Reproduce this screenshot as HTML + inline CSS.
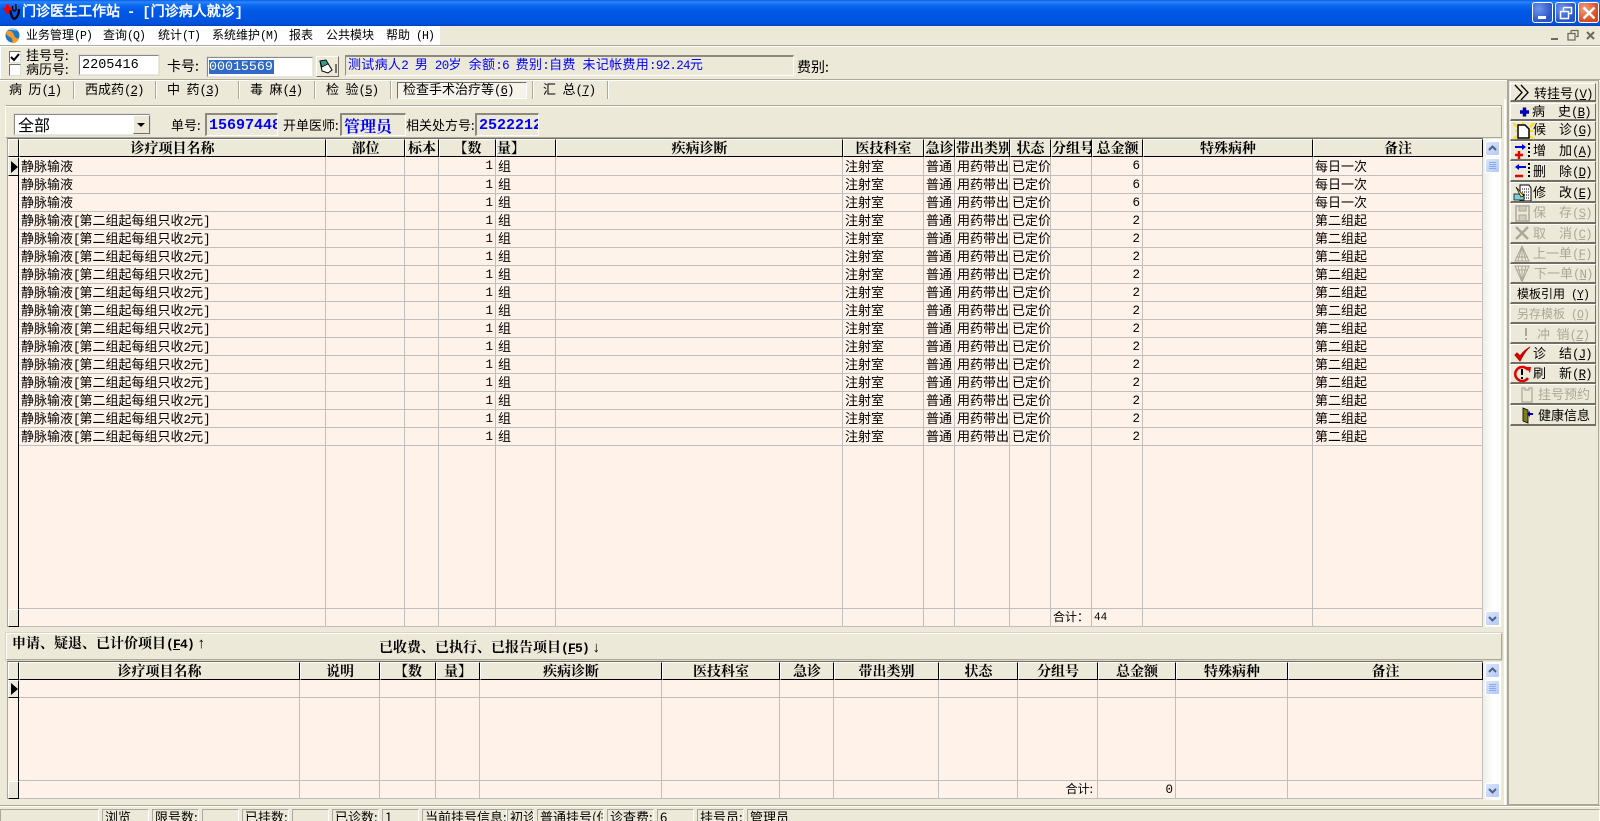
<!DOCTYPE html>
<html lang="zh"><head><meta charset="utf-8"><title>门诊医生工作站</title>
<style>
*{box-sizing:border-box}
html,body{margin:0;padding:0}
body{width:1600px;height:821px;overflow:hidden;background:#ECE9D8;position:relative;font:13px/1 "WenQuanYi Zen Hei","Noto Sans CJK SC",sans-serif;color:#000}
.a{position:absolute;white-space:nowrap}
i.h{font-style:normal;font-family:"Liberation Mono",monospace;font-size:12.5px;letter-spacing:-1px;white-space:pre;line-height:0}
i.s{font-style:normal;font-family:"Liberation Mono",monospace;font-size:11.5px;letter-spacing:-.9px;white-space:pre;line-height:0}
.mn{top:28px;font-size:12px;line-height:14px}
.title{left:0;top:0;width:1600px;height:26px;background:linear-gradient(#0a5ce8 0,#2a86fb 2px,#0e6af0 5px,#0058e6 11px,#0055e0 20px,#0050d8 24px,#0040b8 26px)}
.wb{top:2px;width:21px;height:21px;border:1px solid #fff;border-radius:3px;background:radial-gradient(circle at 30% 30%,#6f95ea,#2a55c9 70%)}
.sunk{border:1px solid;border-color:#8c8a7c #fff #fff #8c8a7c;background:#ECE9D8}
.inp{background:#fff;border:2px solid;border-color:#8c8a7c #ECE9D8 #ECE9D8 #8c8a7c;outline:1px solid #ddd;outline-offset:-1px}
.sep{width:2px;background:#fff;border-left:1px solid #aca899}
.hl{left:0;height:2px;border-top:1px solid #aca899;background:#fff;width:1600px}
.tab{top:82px;font-size:13px}
u{text-decoration:underline}
table{position:absolute;border-collapse:separate;border-spacing:0;table-layout:fixed;background:#FFF2E8}
td,th{padding:0 2px;overflow:hidden;white-space:nowrap;border-right:1px solid #bfbfbf;border-bottom:1px solid #bfbfbf;font-weight:400;font-size:13px;line-height:14px;height:18px}
td{padding-bottom:2px}
th{background:#ECE9D8;font:bold 14px/14px "Noto Serif CJK SC","WenQuanYi Zen Hei",serif;height:18px;border:1px solid;border-color:#fff #000 #000 #fff;padding:0;text-align:center}
td:first-child{padding:0;border-right:1px solid #000;border-bottom:0}
td.r{text-align:right;font-family:"Liberation Mono",monospace;font-size:12.5px;padding-right:2px;padding-bottom:0}
td.g{background:#ECE9D8;border:1px solid;border-color:#fff #000 #000 #fff}
.arr{display:block;width:0;height:0;margin-left:2px;border:6px solid transparent;border-left:7px solid #000;border-right:0}
.track{left:1483px;width:18px;background:linear-gradient(90deg,#efefe8,#fff 60%,#fdfdfd)}
.sb{left:1485px;width:15px;height:15px;border:1px solid #fff;border-radius:2px;background:linear-gradient(135deg,#dbe6fd,#b4c8f6)}
.btn{left:1510px;width:86px;border:1px solid;border-color:#fff #716f64 #716f64 #fff;background:#ECE9D8;border-bottom-width:2px;font-size:13px}
.btn span{position:absolute;top:1px;white-space:pre}
.btn svg{position:absolute;left:2px;top:0}
.dis{color:#aca899}
.st{top:809px;height:12px;overflow:hidden;border:1px solid;border-color:#aca899 #fff #fff #aca899;border-bottom:0;font-size:13px;padding:0 2px;line-height:13px}
.bt{font:bold 14px/15px "Noto Serif CJK SC","WenQuanYi Zen Hei",serif}
.bt i.h{font-weight:700;font-size:13px;letter-spacing:-.8px}
</style></head><body>

<div class="a title"></div>
<svg class="a" style="left:2px;top:2px" width="20" height="20" viewBox="0 0 20 20"><path d="M8 7c1 6 2 9 4 10 3-1 5-5 5-10" fill="none" stroke="#000" stroke-width="2.200"/><path d="M11 4c-2 3 1 6 2.500 4.500S13 4 14 2" fill="none" stroke="#000" stroke-width="1.500"/><path d="M1 7h9M5.500 2.500v9" stroke="#e8000c" stroke-width="3"/></svg>
<div class="a" style="left:22px;top:5px;color:#fff;font:bold 14px/16px 'Liberation Mono','WenQuanYi Zen Hei',monospace;word-spacing:-1.500px">门诊医生工作站 - [门诊病人就诊]</div>
<div class="a wb" style="left:1532px"><div class="a" style="left:5px;top:13px;width:8px;height:3px;background:#fff"></div></div>
<div class="a wb" style="left:1555px"><svg class="a" style="left:3px;top:3px" width="14" height="14"><path d="M4.500 1.500h8v6h-3M1.500 5.500h8v7h-8z M4.500 1.500v3" fill="none" stroke="#fff" stroke-width="1.500"/></svg></div>
<div class="a wb" style="left:1578px;background:radial-gradient(circle at 30% 30%,#f0a080,#d9471f 70%)"><svg class="a" style="left:3px;top:3px" width="14" height="14"><path d="M1.500 1.500l11 11M12.500 1.500l-11 11" stroke="#fff" stroke-width="2.400"/></svg></div>

<div class="a" style="left:0;top:26px;width:440px;height:19px;background:#fff"></div>
<svg class="a" style="left:5px;top:27px" width="15" height="17" viewBox="0 0 15 17"><circle cx="7.500" cy="8.500" r="7" fill="#1e78c8"/><path d="M1 5c4-3 7 0 8 3s3 4 5 3c-1 4-5 6-8 5 3-2 1-5-1-6S1 8 1 5z" fill="#f59a23"/><path d="M3 3c3-2 7-2 9 1-3-1-6-1-9-1z" fill="#9ed0f5"/></svg>
<div class="a mn" style="left:26px">业务管理<i class="s">(P)</i></div>
<div class="a mn" style="left:103px">查询<i class="s">(Q)</i></div>
<div class="a mn" style="left:158px">统计<i class="s">(T)</i></div>
<div class="a mn" style="left:212px">系统维护<i class="s">(M)</i></div>
<div class="a mn" style="left:289px">报表</div>
<div class="a mn" style="left:326px">公共模块</div>
<div class="a mn" style="left:386px">帮助<i class="s"> (H)</i></div>
<div class="a" style="left:1547px;top:28px;width:16px;height:16px;color:#6b6b60"><div class="a" style="left:4px;top:10px;width:7px;height:2px;background:#6b6b60"></div></div>
<svg class="a" style="left:1566px;top:29px" width="15" height="14"><path d="M5 1.500h7v6h-2M2 4.500h7v6.500H2zM5 1.500v3" fill="none" stroke="#6b6b60" stroke-width="1.300"/></svg>
<svg class="a" style="left:1584px;top:29px" width="14" height="14"><path d="M3 3l7 7M10 3l-7 7" stroke="#6b6b60" stroke-width="2"/></svg>

<div class="a hl" style="top:45px"></div>
<div class="a hl" style="top:79px"></div>
<div class="a" style="left:0;top:47px;width:2px;height:32px;border-left:1px solid #fff"></div>

<div class="a" style="left:9px;top:51px;width:12px;height:12px;background:#fff;border:1px solid;border-color:#716f64 #ddd #ddd #716f64"><svg class="a" style="left:0;top:0" width="10" height="10"><path d="M1 5l3 3 5-6" fill="none" stroke="#000" stroke-width="2"/></svg></div>
<div class="a" style="left:9px;top:64px;width:12px;height:12px;background:#fff;border:1px solid;border-color:#716f64 #ddd #ddd #716f64"></div>
<div class="a" style="left:26px;top:48px;font-size:13px;line-height:14px">挂号号:</div>
<div class="a" style="left:26px;top:62px;font-size:13px;line-height:14px">病历号:</div>
<div class="a inp" style="left:78px;top:54px;width:82px;height:22px;font:13.500px/18px 'Liberation Mono',monospace;padding:1px 0 0 2px">2205416</div>
<div class="a" style="left:167px;top:58px;font-size:14px;line-height:16px">卡号:</div>
<div class="a inp" style="left:206px;top:56px;width:108px;height:22px"></div>
<div class="a" style="left:209px;top:60px;width:65px;height:14px;background:#316AC5;color:#fff;font:13.300px/14px 'Liberation Mono',monospace">00015569</div>
<div class="a" style="left:316px;top:56px;width:23px;height:21px;border:1px solid;border-color:#fff #716f64 #716f64 #fff"><svg class="a" style="left:1px;top:1px" width="20" height="18"><path d="M2 3l6-1 6 10-4 3-6-2z" fill="#fff" stroke="#000"/><path d="M2 3l6-1 2 4-6 3z" fill="#2e9e8a" stroke="#000" stroke-width=".7"/><path d="M18 6v9" stroke="#000" stroke-width="1"/></svg></div>
<div class="a sunk" style="left:345px;top:55px;width:449px;height:21px;border-top:2px solid #8c8a7c"></div>
<div class="a" style="left:348px;top:57px;color:#0000ff;font-size:13px;line-height:14px;letter-spacing:.3px">测试病人<i class="h" style="letter-spacing:-.7px">2 </i>男<i class="h" style="letter-spacing:-.7px"> 20</i>岁<i class="h" style="letter-spacing:-.7px"> </i>余额<i class="h" style="letter-spacing:-.7px">:6 </i>费别<i class="h" style="letter-spacing:-.7px">:</i>自费<i class="h" style="letter-spacing:-.7px"> </i>未记帐费用<i class="h" style="letter-spacing:-.7px">:92.24</i>元</div>
<div class="a" style="left:797px;top:59px;font-size:14px;line-height:16px">费别:</div>

<div class="a tab" style="left:9px">病<i class="h"> </i>历<i class="h">(<u>1</u>)</i></div>
<div class="a sep" style="left:73px;top:81px;height:18px"></div>
<div class="a tab" style="left:85px">西成药<i class="h">(<u>2</u>)</i></div>
<div class="a sep" style="left:155px;top:81px;height:18px"></div>
<div class="a tab" style="left:167px">中<i class="h"> </i>药<i class="h">(<u>3</u>)</i></div>
<div class="a sep" style="left:238px;top:81px;height:18px"></div>
<div class="a tab" style="left:250px">毒<i class="h"> </i>麻<i class="h">(<u>4</u>)</i></div>
<div class="a sep" style="left:314px;top:81px;height:18px"></div>
<div class="a tab" style="left:326px">检<i class="h"> </i>验<i class="h">(<u>5</u>)</i></div>
<div class="a sep" style="left:390px;top:81px;height:18px"></div>
<div class="a" style="left:397px;top:82px;width:130px;height:17px;border:1px solid;border-color:#716f64 #fff #fff #716f64;background:#f5f3ea"></div>
<div class="a tab" style="left:403px">检查手术治疗等<i class="h">(<u>6</u>)</i></div>
<div class="a sep" style="left:532px;top:81px;height:18px"></div>
<div class="a tab" style="left:543px">汇<i class="h"> </i>总<i class="h">(<u>7</u>)</i></div>
<div class="a sep" style="left:607px;top:81px;height:18px"></div>

<div class="a" style="left:0;top:99px;width:1506px;height:707px;border-right:2px solid #fff"></div>
<div class="a" style="left:5px;top:105px;width:1497px;height:33px;border:1px solid;border-color:#aca899 #aca899 #aca899 #fff;box-shadow:inset 0 1px 0 #fff"></div>

<div class="a inp" style="left:13px;top:113px;width:138px;height:23px;font-size:16px;line-height:19px;padding-left:3px">全部</div>
<div class="a" style="left:133px;top:115px;width:17px;height:19px;background:#ECE9D8;border:1px solid;border-color:#fff #716f64 #716f64 #fff"><div class="a" style="left:3px;top:7px;border:4px solid transparent;border-top:4px solid #000;border-bottom:0"></div></div>
<div class="a" style="left:171px;top:118px;font-size:13px;line-height:14px">单号:</div>
<div class="a sunk" style="left:205px;top:113px;width:73px;height:23px;overflow:hidden;color:#0000ff;font:bold 15px/21px 'Liberation Mono','Liberation Serif',monospace;padding-left:2px;border-width:2px 1px 1px 2px">15697448</div>
<div class="a" style="left:283px;top:118px;font-size:13px;line-height:14px">开单医师:</div>
<div class="a sunk" style="left:340px;top:113px;width:66px;height:23px;color:#0000ff;font:bold 16px/21px 'Noto Serif CJK SC','WenQuanYi Zen Hei',serif;padding-left:2px;border-width:2px 1px 1px 2px">管理员</div>
<div class="a" style="left:406px;top:118px;font-size:13px;line-height:14px">相关处方号:</div>
<div class="a sunk" style="left:475px;top:113px;width:64px;height:23px;overflow:hidden;color:#0000ff;font:bold 15px/21px 'Liberation Mono','Liberation Serif',monospace;padding-left:2px;border-width:2px 1px 1px 2px">2522212</div>

<table style="left:7px;top:138px;width:1476px;border-top:1px solid #716f64;border-left:1px solid #aca899">
<colgroup><col style="width:11px"><col style="width:307px"><col style="width:79px"><col style="width:34px"><col style="width:57px"><col style="width:60px"><col style="width:287px"><col style="width:81px"><col style="width:31px"><col style="width:55px"><col style="width:41px"><col style="width:41px"><col style="width:51px"><col style="width:170px"><col style="width:170px"></colgroup>
<tr><th></th><th>诊疗项目名称</th><th>部位</th><th>标本</th><th>【数</th><th style="text-align:left">量】</th><th>疾病诊断</th><th>医技科室</th><th>急诊</th><th>带出类别</th><th>状态</th><th>分组号</th><th>总金额</th><th>特殊病种</th><th>备注</th></tr>
<tr style="height:19px"><td class="g" style="height:19px"><i class="arr"></i></td><td style="padding-bottom:0">静脉输液</td><td></td><td></td><td class="r">1</td><td style="padding-bottom:0">组</td><td></td><td style="padding-bottom:0">注射室</td><td style="padding-bottom:0">普通</td><td style="padding-bottom:0">用药带出</td><td style="padding-bottom:0">已定价</td><td></td><td class="r">6</td><td></td><td style="padding-bottom:0">每日一次</td></tr>
<tr><td></td><td>静脉输液</td><td></td><td></td><td class="r">1</td><td>组</td><td></td><td>注射室</td><td>普通</td><td>用药带出</td><td>已定价</td><td></td><td class="r">6</td><td></td><td>每日一次</td></tr>
<tr><td></td><td>静脉输液</td><td></td><td></td><td class="r">1</td><td>组</td><td></td><td>注射室</td><td>普通</td><td>用药带出</td><td>已定价</td><td></td><td class="r">6</td><td></td><td>每日一次</td></tr>
<tr><td></td><td>静脉输液<i class="h">[</i>第二组起每组只收<i class="h">2</i>元<i class="h">]</i></td><td></td><td></td><td class="r">1</td><td>组</td><td></td><td>注射室</td><td>普通</td><td>用药带出</td><td>已定价</td><td></td><td class="r">2</td><td></td><td>第二组起</td></tr>
<tr><td></td><td>静脉输液<i class="h">[</i>第二组起每组只收<i class="h">2</i>元<i class="h">]</i></td><td></td><td></td><td class="r">1</td><td>组</td><td></td><td>注射室</td><td>普通</td><td>用药带出</td><td>已定价</td><td></td><td class="r">2</td><td></td><td>第二组起</td></tr>
<tr><td></td><td>静脉输液<i class="h">[</i>第二组起每组只收<i class="h">2</i>元<i class="h">]</i></td><td></td><td></td><td class="r">1</td><td>组</td><td></td><td>注射室</td><td>普通</td><td>用药带出</td><td>已定价</td><td></td><td class="r">2</td><td></td><td>第二组起</td></tr>
<tr><td></td><td>静脉输液<i class="h">[</i>第二组起每组只收<i class="h">2</i>元<i class="h">]</i></td><td></td><td></td><td class="r">1</td><td>组</td><td></td><td>注射室</td><td>普通</td><td>用药带出</td><td>已定价</td><td></td><td class="r">2</td><td></td><td>第二组起</td></tr>
<tr><td></td><td>静脉输液<i class="h">[</i>第二组起每组只收<i class="h">2</i>元<i class="h">]</i></td><td></td><td></td><td class="r">1</td><td>组</td><td></td><td>注射室</td><td>普通</td><td>用药带出</td><td>已定价</td><td></td><td class="r">2</td><td></td><td>第二组起</td></tr>
<tr><td></td><td>静脉输液<i class="h">[</i>第二组起每组只收<i class="h">2</i>元<i class="h">]</i></td><td></td><td></td><td class="r">1</td><td>组</td><td></td><td>注射室</td><td>普通</td><td>用药带出</td><td>已定价</td><td></td><td class="r">2</td><td></td><td>第二组起</td></tr>
<tr><td></td><td>静脉输液<i class="h">[</i>第二组起每组只收<i class="h">2</i>元<i class="h">]</i></td><td></td><td></td><td class="r">1</td><td>组</td><td></td><td>注射室</td><td>普通</td><td>用药带出</td><td>已定价</td><td></td><td class="r">2</td><td></td><td>第二组起</td></tr>
<tr><td></td><td>静脉输液<i class="h">[</i>第二组起每组只收<i class="h">2</i>元<i class="h">]</i></td><td></td><td></td><td class="r">1</td><td>组</td><td></td><td>注射室</td><td>普通</td><td>用药带出</td><td>已定价</td><td></td><td class="r">2</td><td></td><td>第二组起</td></tr>
<tr><td></td><td>静脉输液<i class="h">[</i>第二组起每组只收<i class="h">2</i>元<i class="h">]</i></td><td></td><td></td><td class="r">1</td><td>组</td><td></td><td>注射室</td><td>普通</td><td>用药带出</td><td>已定价</td><td></td><td class="r">2</td><td></td><td>第二组起</td></tr>
<tr><td></td><td>静脉输液<i class="h">[</i>第二组起每组只收<i class="h">2</i>元<i class="h">]</i></td><td></td><td></td><td class="r">1</td><td>组</td><td></td><td>注射室</td><td>普通</td><td>用药带出</td><td>已定价</td><td></td><td class="r">2</td><td></td><td>第二组起</td></tr>
<tr><td></td><td>静脉输液<i class="h">[</i>第二组起每组只收<i class="h">2</i>元<i class="h">]</i></td><td></td><td></td><td class="r">1</td><td>组</td><td></td><td>注射室</td><td>普通</td><td>用药带出</td><td>已定价</td><td></td><td class="r">2</td><td></td><td>第二组起</td></tr>
<tr><td></td><td>静脉输液<i class="h">[</i>第二组起每组只收<i class="h">2</i>元<i class="h">]</i></td><td></td><td></td><td class="r">1</td><td>组</td><td></td><td>注射室</td><td>普通</td><td>用药带出</td><td>已定价</td><td></td><td class="r">2</td><td></td><td>第二组起</td></tr>
<tr><td></td><td>静脉输液<i class="h">[</i>第二组起每组只收<i class="h">2</i>元<i class="h">]</i></td><td></td><td></td><td class="r">1</td><td>组</td><td></td><td>注射室</td><td>普通</td><td>用药带出</td><td>已定价</td><td></td><td class="r">2</td><td></td><td>第二组起</td></tr>
<tr><td style="height:163px"></td><td style="height:163px"></td><td></td><td></td><td></td><td></td><td></td><td></td><td></td><td></td><td></td><td></td><td></td><td></td><td></td></tr>
<tr><td class="g"></td><td></td><td></td><td></td><td></td><td></td><td></td><td></td><td></td><td></td><td></td><td style="font-size:12px">合计：</td><td style="font-size:11px;font-family:'Liberation Mono',monospace;padding-bottom:0">44</td><td></td><td></td></tr>
</table>
<div class="a track" style="top:139px;height:488px"></div>
<div class="a sb" style="top:141px"><svg class="a" width="13" height="13"><path d="M3 8l3.500-3.500L10 8" fill="none" stroke="#4d6185" stroke-width="2"/></svg></div>
<div class="a sb" style="top:158px"><svg class="a" width="13" height="13"><path d="M3 3.500h7M3 5.500h7M3 7.500h7M3 9.500h7" stroke="#8aa8ee"/></svg></div>
<div class="a sb" style="top:611px"><svg class="a" width="13" height="13"><path d="M3 5l3.500 3.500L10 5" fill="none" stroke="#4d6185" stroke-width="2"/></svg></div>

<div class="a" style="left:6px;top:633px;width:1496px;height:27px;border:1px solid;border-color:#fff #aca899 #aca899 #fff;outline:1px solid #d8d5c4"></div>
<div class="a bt" style="left:12px;top:636px">申请、疑退、已计价项目<i class="h">(<u>F</u>4)</i> <span style="font:bold 15px/15px 'Liberation Sans'">↑</span></div>
<div class="a bt" style="left:379px;top:640px">已收费、已执行、已报告项目<i class="h">(<u>F</u>5)</i> <span style="font:bold 15px/15px 'Liberation Sans'">↓</span></div>

<table style="left:7px;top:661px;width:1476px;border-top:1px solid #716f64;border-left:1px solid #aca899">
<colgroup><col style="width:11px"><col style="width:281px"><col style="width:80px"><col style="width:56px"><col style="width:44px"><col style="width:182px"><col style="width:118px"><col style="width:54px"><col style="width:105px"><col style="width:79px"><col style="width:80px"><col style="width:78px"><col style="width:112px"><col style="width:195px"></colgroup>
<tr><th></th><th>诊疗项目名称</th><th>说明</th><th>【数</th><th>量】</th><th>疾病诊断</th><th>医技科室</th><th>急诊</th><th>带出类别</th><th>状态</th><th>分组号</th><th>总金额</th><th>特殊病种</th><th>备注</th></tr>
<tr><td class="g"><i class="arr"></i></td><td></td><td></td><td></td><td></td><td></td><td></td><td></td><td></td><td></td><td></td><td></td><td></td><td></td></tr>
<tr><td style="height:83px"></td><td style="height:83px"></td><td></td><td></td><td></td><td></td><td></td><td></td><td></td><td></td><td></td><td></td><td></td><td></td></tr>
<tr><td class="g"></td><td></td><td></td><td></td><td></td><td></td><td></td><td></td><td></td><td></td><td style="text-align:right;font-size:12px;padding-right:4px">合计:</td><td class="r">0</td><td></td><td></td></tr>
</table>
<div class="a track" style="top:662px;height:138px"></div>
<div class="a sb" style="top:663px"><svg class="a" width="13" height="13"><path d="M3 8l3.500-3.500L10 8" fill="none" stroke="#4d6185" stroke-width="2"/></svg></div>
<div class="a sb" style="top:680px"><svg class="a" width="13" height="13"><path d="M3 3.500h7M3 5.500h7M3 7.500h7M3 9.500h7" stroke="#8aa8ee"/></svg></div>
<div class="a sb" style="top:783px"><svg class="a" width="13" height="13"><path d="M3 5l3.500 3.500L10 5" fill="none" stroke="#4d6185" stroke-width="2"/></svg></div>

<div class="a" style="left:1507px;top:80px;width:92px;height:725px;border:1px solid #aca899;border-left:2px solid #aca899"></div>
<div class="a hl" style="top:805px"></div>

<div class="a btn" style="top:83px;height:19px"><svg width="22" height="17"><path d="M2 1l7 7.500L2 16M8 1l7 7.500L8 16" fill="none" stroke="#000" stroke-width="1.300"/></svg><span style="left:23px;top:2px">转挂号<i class="h">(<u>V</u>)</i></span></div>
<div class="a btn" style="top:103px;height:18px"><svg width="22" height="16"><path d="M7 8h9M11.500 3.500v9" stroke="#0000b0" stroke-width="3.500"/></svg><span style="left:21px;top:0">病<i class="h">  </i>史<i class="h">(<u>B</u>)</i></span></div>
<div class="a btn" style="top:121px;height:20px"><svg width="22" height="18"><path d="M0 1l4 4M21 1l-4 4M0 17l4-3M21 17l-4-3M2 9h2M17 9h3M10 0v2" stroke="#ffe000" stroke-width="2"/><path d="M5 3h7l4 4v9H5z" fill="#fff" stroke="#000" stroke-width="1.500"/></svg><span style="left:22px;top:0">候<i class="h">  </i>诊<i class="h">(<u>G</u>)</i></span></div>
<div class="a btn" style="top:141px;height:20px"><svg width="22" height="18"><path d="M2 5h9" stroke="#0000e0" stroke-width="2"/><path d="M9 2l4 3-4 3z" fill="#0000e0"/><path d="M2 13h8M6 9v8" stroke="#e00000" stroke-width="2.500"/><path d="M16 1v16" stroke="#000" stroke-width="2" stroke-dasharray="2 2"/></svg><span style="left:22px">增<i class="h">  </i>加<i class="h">(<u>A</u>)</i></span></div>
<div class="a btn" style="top:161px;height:21px"><svg width="22" height="18"><path d="M4 5h9" stroke="#0000e0" stroke-width="2"/><path d="M6 2L2 5l4 3z" fill="#0000e0"/><path d="M2 14h8" stroke="#e00000" stroke-width="2.500"/><path d="M16 1v16" stroke="#000" stroke-width="2" stroke-dasharray="2 2"/></svg><span style="left:22px;top:2px">删<i class="h">  </i>除<i class="h">(<u>D</u>)</i></span></div>
<div class="a btn" style="top:182px;height:21px"><svg width="22" height="18"><path d="M7 2h9l2 3v13H7z" fill="#fff" stroke="#000"/><path d="M9 6h7M9 9h7M9 12h7M9 15h7" stroke="#000" stroke-dasharray="1 1"/><path d="M1 11h10v6H1z" fill="#7cd0d8" stroke="#000" stroke-width=".7"/><path d="M3 4l8 9-3 1z" fill="#ffe860" stroke="#000" stroke-width=".7"/></svg><span style="left:22px;top:2px">修<i class="h">  </i>改<i class="h">(<u>E</u>)</i></span></div>
<div class="a btn dis" style="top:203px;height:21px"><svg width="22" height="18"><path d="M3 2h13v15H3z" fill="none" stroke="#aca899" stroke-width="1.500"/><path d="M6 2h7v5H6zM6 11h7v6H6z" fill="#d0cdbc" stroke="#aca899"/></svg><span style="left:22px">保<i class="h">  </i>存<i class="h">(<u>S</u>)</i></span></div>
<div class="a btn dis" style="top:224px;height:20px"><svg width="22" height="17"><path d="M3 2l12 12M15 2L3 14" stroke="#aca899" stroke-width="2.500"/></svg><span style="left:22px">取<i class="h">  </i>消<i class="h">(<u>C</u>)</i></span></div>
<div class="a btn dis" style="top:244px;height:20px"><svg width="22" height="18"><path d="M9 1L2 16h14zM9 1v15M9 1L5 16M9 1l4 15M3 12h12" fill="none" stroke="#aca899"/></svg><span style="left:22px">上一单<i class="h">(<u>F</u>)</i></span></div>
<div class="a btn dis" style="top:264px;height:20px"><svg width="22" height="18"><path d="M9 17L2 1h14zM9 17V1M9 17L5 1M9 17l4-16M3 5h12" fill="none" stroke="#aca899"/></svg><span style="left:23px">下一单<i class="h">(<u>N</u>)</i></span></div>
<div class="a btn" style="top:284px;height:20px"><span style="left:6px;font-size:12px;top:3px">模板引用<i class="s"> (<u>Y</u>)</i></span></div>
<div class="a btn dis" style="top:304px;height:20px"><span style="left:6px;font-size:12px;top:3px">另存模板<i class="s"> (<u>O</u>)</i></span></div>
<div class="a btn dis" style="top:324px;height:20px"><svg width="22" height="17"><path d="M13 3v8M13 13v2" stroke="#aca899" stroke-width="2"/></svg><span style="left:26px;top:2px">冲<i class="h"> </i>销<i class="h">(<u>Z</u>)</i></span></div>
<div class="a btn" style="top:344px;height:20px"><svg width="22" height="18"><path d="M2 10l5 6C10 10 13 5 17 2 12 5 9 8 7 11L4 8z" fill="#e00000" stroke="#c00000"/></svg><span style="left:22px">诊<i class="h">  </i>结<i class="h">(<u>J</u>)</i></span></div>
<div class="a btn" style="top:364px;height:20px"><svg width="22" height="18"><path d="M15 5A7 7 0 1 0 15 13" fill="none" stroke="#e00000" stroke-width="2.500"/><path d="M13 2l5 0-1 6z" fill="#e00000"/><path d="M9 4v6M9 12v2" stroke="#000" stroke-width="2"/></svg><span style="left:22px">刷<i class="h">  </i>新<i class="h">(<u>R</u>)</i></span></div>
<div class="a btn dis" style="top:384px;height:21px"><svg width="22" height="18"><path d="M6 3h3v2h4V3h3v14H6z" fill="none" stroke="#aca899" stroke-width="1.200" transform="translate(3 0)"/></svg><span style="left:27px;top:2px">挂号预约</span></div>
<div class="a btn" style="top:405px;height:21px"><svg width="30" height="18"><path d="M10 2l5 2v13l-5-2z" fill="#7f7f10" stroke="#000" stroke-width=".8"/><path d="M17 8h3" stroke="#0000b0" stroke-width="2"/><path d="M20 5l-3 3 3 3z" fill="#0000b0" transform="translate(-3 0)"/></svg><span style="left:27px;top:2px">健康信息</span></div>

<div class="a st" style="left:0;width:99px"></div>
<div class="a st" style="left:102px;width:47px">浏览</div>
<div class="a st" style="left:152px;width:47px">限号数:</div>
<div class="a st" style="left:202px;width:37px"></div>
<div class="a st" style="left:242px;width:47px">已挂数:</div>
<div class="a st" style="left:292px;width:37px"></div>
<div class="a st" style="left:332px;width:47px">已诊数:</div>
<div class="a st" style="left:382px;width:37px">1</div>
<div class="a st" style="left:422px;width:85px">当前挂号信息:</div>
<div class="a st" style="left:507px;width:27px">初诊</div>
<div class="a st" style="left:537px;width:67px">普通挂号(住</div>
<div class="a st" style="left:607px;width:47px">诊查费:</div>
<div class="a st" style="left:657px;width:37px">6</div>
<div class="a st" style="left:697px;width:47px">挂号员:</div>
<div class="a st" style="left:747px;width:853px">管理员</div>
</body></html>
